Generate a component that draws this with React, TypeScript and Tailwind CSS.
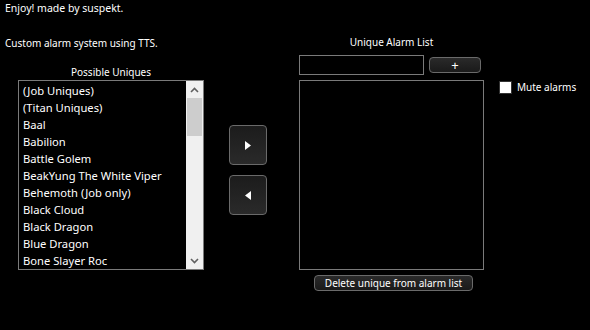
import React from "react";

const uniques = [
  "(Job Uniques)",
  "(Titan Uniques)",
  "Baal",
  "Babilion",
  "Battle Golem",
  "BeakYung The White Viper",
  "Behemoth (Job only)",
  "Black Cloud",
  "Black Dragon",
  "Blue Dragon",
  "Bone Slayer Roc",
];

function Chevron({ up }: { up?: boolean }) {
  return (
    <svg width="9" height="6" viewBox="0 0 9 6" className="block">
      <path
        d={up ? "M1 5 L4.5 1.5 L8 5" : "M1 1 L4.5 4.5 L8 1"}
        stroke="#606060"
        strokeWidth="1.6"
        fill="none"
      />
    </svg>
  );
}

export default function App() {
  return (
    <div
      className="w-[590px] h-[330px] bg-black text-white text-[10px] leading-[16px] overflow-hidden flex"
      style={{ fontFamily: '"Noto Sans", "Open Sans", sans-serif' }}
    >
      {/* left column */}
      <div className="w-[204px] shrink-0 flex flex-col">
        <p className="pl-[5px] text-[10.5px]">Enjoy! made by suspekt.</p>
        <p className="pl-[5px] mt-[19px] whitespace-nowrap">Custom alarm system using TTS.</p>
        <p className="mt-[13px] ml-[18px] text-center">Possible Uniques</p>
        <div className="ml-[18px] h-[190px] border border-[#7a7a7a] flex">
          <ul className="flex-1 pt-[1px] pl-[4px] overflow-hidden text-[11.2px]">
            {uniques.map((u) => (
              <li key={u} className="h-[17px] leading-[17px] whitespace-nowrap">
                {u}
              </li>
            ))}
          </ul>
          <div className="w-[17px] bg-[#f0f0f0] flex flex-col items-center">
            <div className="h-[17px] flex items-center justify-center">
              <Chevron up />
            </div>
            <div className="w-[15px] h-[38px] bg-[#cdcdcd]" />
            <div className="flex-1" />
            <div className="h-[17px] flex items-center justify-center">
              <Chevron />
            </div>
          </div>
        </div>
      </div>

      {/* middle buttons */}
      <div className="ml-[25px] pt-[125px] flex flex-col gap-[10px]">
        <button className="w-[38px] h-[40px] rounded-[4px] border border-[#6a6a6a] bg-gradient-to-b from-[#1c1c1c] to-[#2a2a2a] flex items-center justify-center">
          <svg width="6" height="9" viewBox="0 0 6 9">
            <path d="M0 0 L6 4.5 L0 9 Z" fill="#ffffff" />
          </svg>
        </button>
        <button className="w-[38px] h-[40px] rounded-[4px] border border-[#6a6a6a] bg-gradient-to-b from-[#1c1c1c] to-[#2a2a2a] flex items-center justify-center">
          <svg width="6" height="9" viewBox="0 0 6 9">
            <path d="M6 0 L0 4.5 L6 9 Z" fill="#ffffff" />
          </svg>
        </button>
      </div>

      {/* right column */}
      <div className="ml-[32px] w-[185px] pt-[34px] flex flex-col">
        <p className="text-center">Unique Alarm List</p>
        <div className="mt-[5px] flex items-start">
          <input className="w-[125px] h-[20px] border border-[#7a7a7a] bg-black outline-none" />
          <button className="ml-[5px] mt-[2px] w-[52px] h-[16px] rounded-[4px] border border-[#6a6a6a] bg-gradient-to-b from-[#2a2a2a] to-[#1a1a1a] flex items-center justify-center text-[13px] leading-[13px]">
            +
          </button>
        </div>
        <div className="mt-[5px] h-[190px] border border-[#7a7a7a]" />
        <div className="mt-[5px] flex justify-center pl-[4px]">
          <button className="w-[159px] h-[16px] rounded-[4px] border border-[#6a6a6a] bg-gradient-to-b from-[#2a2a2a] to-[#1a1a1a] text-[10px] leading-[14px] whitespace-nowrap">
            Delete unique from alarm list
          </button>
        </div>
      </div>

      {/* mute checkbox */}
      <div className="ml-[15px] pt-[80px]">
        <div className="flex items-center gap-[5px]">
          <div className="w-[13px] h-[13px] bg-white border border-[#333]" />
          <span className="leading-[14px]">Mute alarms</span>
        </div>
      </div>
    </div>
  );
}
